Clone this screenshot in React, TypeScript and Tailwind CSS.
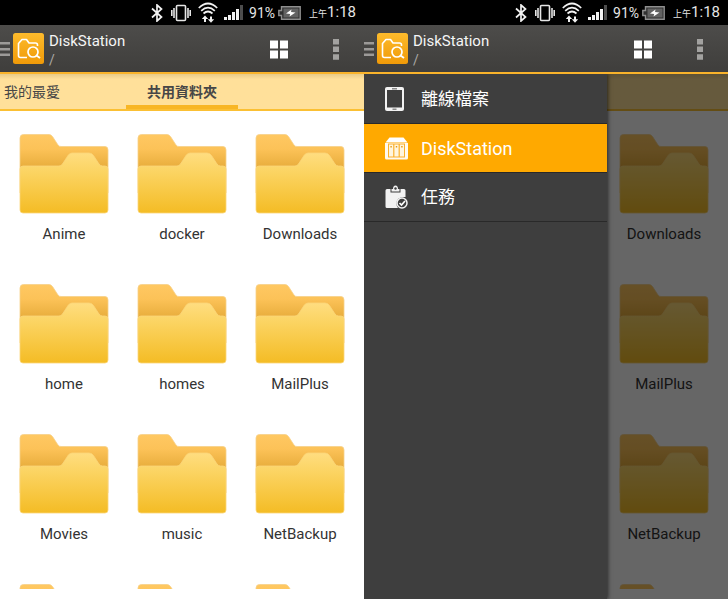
import { useState } from "react";
import clsx from "clsx";

const folders = [
  "Anime",
  "docker",
  "Downloads",
  "home",
  "homes",
  "MailPlus",
  "Movies",
  "music",
  "NetBackup",
];

const pending = [10, 11, 12];

const tabs = [
  { id: "favorites", label: "我的最愛", width: "w-[126px] pl-1 text-left" },
  { id: "shared", label: "共用資料夾", width: "w-28 text-center" },
];

function FolderIcon() {
  return (
    <svg width="90" height="81" viewBox="0 0 90 81" className="block">
      <defs>
        <linearGradient id="folder-back" x1="0" y1="0" x2="0" y2="1">
          <stop offset="0" stopColor="#ffc862" />
          <stop offset="0.25" stopColor="#fcc258" />
          <stop offset="0.56" stopColor="#e8ad3c" />
          <stop offset="1" stopColor="#e8ad3c" />
        </linearGradient>
        <linearGradient id="folder-front" x1="0" y1="0" x2="0" y2="1">
          <stop offset="0" stopColor="#ffdd80" />
          <stop offset="0.25" stopColor="#fcd668" />
          <stop offset="1" stopColor="#f4bc25" />
        </linearGradient>
      </defs>
      <path
        d="M1 5Q1 1.5 4.500 1.500H30Q32 1.500 33.500 3.500L39 12Q40 13.500 42 13.500H86Q89 13.500 89 17V60H1Z"
        fill="url(#folder-back)"
        stroke="#f6d089"
        strokeWidth="0.8"
      />
      <path
        d="M1 36Q1 33 4 33H40Q42 33 43.500 31L49 22.500Q50.500 20 53 20H70Q73 20 74.500 22.500L80 31Q81.500 33 83.500 33H86Q89 33 89 36V77Q89 80 86 80H4Q1 80 1 77Z"
        fill="url(#folder-front)"
        stroke="#fbd67a"
        strokeWidth="0.8"
      />
    </svg>
  );
}

function StatusBar() {
  return (
    <div className="flex h-[25px] shrink-0 items-center justify-end bg-black pr-2 text-[#e6e6e6]">
      <svg width="12" height="18" viewBox="0 0 12 18" fill="none" stroke="#f2f2f2" strokeWidth="1.700" className="mr-2">
        <path d="M1 4.500L10.500 13 6 17V1L10.500 5 1 13.500" />
      </svg>
      <svg width="20" height="18" viewBox="0 0 20 18" fill="none" stroke="#e6e6e6" strokeWidth="1.600" className="mr-[7px]">
        <rect x="5.500" y="1.500" width="9" height="15" rx="1" />
        <path d="M3 4V14M17 4V14M0.800 6V12M19.200 6V12" />
      </svg>
      <svg width="20" height="21" viewBox="0 0 20 21" fill="none" stroke="#f2f2f2" strokeWidth="1.700" className="mr-1.5">
        <path d="M0.800 6Q10-3 19.200 6M3.200 8.800Q10 2.500 16.800 8.800M5.500 11.500Q10 7.500 14.500 11.500" />
        <path d="M7 20V16M13 14.500V18" strokeWidth="2" />
        <path d="M3.800 17L7 13.500 10.200 17ZM9.800 17.200L13 20.800 16.200 17.200Z" fill="#f2f2f2" stroke="none" />
      </svg>
      <svg width="19" height="15" viewBox="0 0 19 15" fill="#f2f2f2" className="mr-1.5">
        <path d="M0 12h3v3H0zM4 10h3v5H4zM8 7h3v8H8zM12 4h3v11h-3z" />
        <path d="M16 0h3v15h-3z" fill="#4d4d4d" />
      </svg>
      <span className="mr-[3px] text-[14px] leading-none">91%</span>
      <svg width="23" height="14" viewBox="0 0 23 14" className="mr-2">
        <path d="M3.500 0.800H22.200V13.200H3.500V9.500H0.800V4.500H3.500Z" fill="#303030" stroke="#8f8f8f" strokeWidth="1.400" />
        <path d="M5.500 2.500H20.500V11.500H5.500Z" fill="#626262" />
        <path d="M8 7.500L13.500 3.500 13 6 17.500 6.500 11.500 10.500 12.200 8Z" fill="#fff" />
      </svg>
      <span className="pt-1 text-[9px] leading-none">上午</span>
      <span className="text-[15px] leading-none">1:18</span>
    </div>
  );
}

function ActionBar({ onToggle }: { onToggle: () => void }) {
  return (
    <header className="flex h-[49px] shrink-0 items-center border-b-2 border-[#f9b32b] bg-linear-to-b from-[#4d4c4a] to-[#3f3e3c]">
      <button aria-label="Menu" onClick={onToggle} className="flex items-center gap-[3px]">
        <svg width="10" height="15" viewBox="0 0 10 15" fill="#9c9a98">
          <path d="M0 1h10v2.500H0zM0 7h10v2.500H0zM0 12.500h10v2.500H0z" />
        </svg>
        <svg width="31" height="31" viewBox="0 0 31 31" fill="none">
          <defs>
            <linearGradient id="app-icon" x1="0" y1="0" x2="0" y2="1">
              <stop offset="0" stopColor="#fdbb2c" />
              <stop offset="1" stopColor="#f09a08" />
            </linearGradient>
          </defs>
          <rect width="31" height="31" rx="2.500" fill="url(#app-icon)" />
          <path
            d="M14 24.500H7.500Q5.500 24.500 5.500 22.500V10.500L9 6.500H13.500L16 10H22.500Q24.500 10 24.500 12V13"
            stroke="#fff"
            strokeWidth="1.600"
            strokeLinejoin="round"
          />
          <circle cx="20" cy="19" r="5" stroke="#fff" strokeWidth="1.700" />
          <path d="M23.500 22.500L27 25" stroke="#fff" strokeWidth="1.900" />
        </svg>
      </button>
      <div className="ml-[5px] flex-1 pt-1">
        <h1 className="text-[15px] leading-[18px] text-[#f5f5f5]">DiskStation</h1>
        <p className="text-[14px] leading-5 text-[#aaa8a6]">/</p>
      </div>
      <button aria-label="Grid view" className="mr-[45px] pt-px">
        <svg width="18" height="19" viewBox="0 0 18 19" fill="#fff">
          <path d="M0 0.500h8v8H0zM10 0.500h8v8h-8zM0 10.500h8v8H0zM10 10.500h8v8h-8z" />
        </svg>
      </button>
      <button aria-label="More options" className="mr-[25px] pt-0.5">
        <svg width="6" height="21" viewBox="0 0 6 21" fill="#a3a2a0">
          <path d="M0 0h6v5.500H0zM0 7.600h6v5.500H0zM0 15.300h6v5.500H0z" />
        </svg>
      </button>
    </header>
  );
}

function PhoneIcon() {
  return (
    <svg width="19" height="24" viewBox="0 0 19 24">
      <rect width="19" height="24" rx="2" fill="#f2f2f2" />
      <path d="M2 3h15v17.500H2z" fill="#3e3e3e" />
      <path d="M7 1h5v1.400H7zM7.500 21.500h4v1.500h-4z" fill="#8a8a8a" />
    </svg>
  );
}

function ServerIcon() {
  return (
    <svg width="23" height="23" viewBox="0 0 23 23">
      <path d="M4.500 0.500H18.500L22.500 5.500H0.500Z" fill="#fff" />
      <path d="M0 6H23V21Q23 22.500 21.500 22.500H1.500Q0 22.500 0 21Z" fill="#fffaf0" />
      <path d="M3 6.500H20V20.500H3Z" fill="#fbb12c" />
      <path d="M4 7.500h4.200v12H4zM9.400 7.500h4.200v12H9.400zM14.800 7.500h4.200v12h-4.200z" fill="#fff6e0" />
      <path d="M5.400 9h1.400v1.500H5.400zM10.800 9h1.400v1.500h-1.400zM16.200 9h1.400v1.500h-1.400z" fill="#e59a10" />
    </svg>
  );
}

function TaskIcon() {
  return (
    <svg width="23" height="24" viewBox="0 0 23 24">
      <path d="M2 4H5.500V7.500H15.500V4H19Q20.500 4 20.500 5.500V12Q11 11.500 11.500 19Q11.500 21.500 13 23H2Q0.500 23 0.500 21.500V5.500Q0.500 4 2 4Z" fill="#f2f2f2" />
      <path d="M6.500 6.500V4H8Q8 0.500 10.500 0.500T13 4H14.500V6.500Z" fill="#f2f2f2" />
      <circle cx="10.500" cy="3.500" r="1.200" fill="#3e3e3e" />
      <circle cx="17" cy="18" r="5" fill="#3e3e3e" stroke="#f2f2f2" strokeWidth="1.500" />
      <path d="M14.500 18L16.500 20 20 16" fill="none" stroke="#fff" strokeWidth="1.700" />
    </svg>
  );
}

const menu = [
  { id: "offline", label: "離線檔案", text: "text-[17px]", icon: <PhoneIcon /> },
  { id: "station", label: "DiskStation", text: "text-[18px]", icon: <ServerIcon /> },
  { id: "tasks", label: "任務", text: "text-[17px]", icon: <TaskIcon /> },
];

function Drawer() {
  const [active, setActive] = useState("station");

  return (
    <div className="absolute inset-0 overflow-hidden bg-black/60">
      <nav className="h-full w-2/3 bg-[#3e3e3e] pt-px shadow-[1px_0_4px_rgba(0,0,0,0.6)]">
        {menu.map((item) => (
          <button
            key={item.id}
            onClick={() => setActive(item.id)}
            className={clsx(
              "flex h-[49px] w-full items-center border-b border-[#292929] pl-5 text-white",
              item.text,
              active === item.id && "bg-[#ffa900]"
            )}
          >
            <span className="flex w-[37px] justify-start pl-px">{item.icon}</span>
            <span className="pt-px">{item.label}</span>
          </button>
        ))}
      </nav>
    </div>
  );
}

function Screen({ drawer = false }: { drawer?: boolean }) {
  const [open, setOpen] = useState(drawer);
  const [tab, setTab] = useState("shared");

  return (
    <section className="flex min-w-0 flex-1 flex-col overflow-hidden">
      <StatusBar />
      <ActionBar onToggle={() => setOpen(!open)} />
      <div className="relative flex min-h-0 flex-1 flex-col bg-white">
        <div className="flex h-[37px] shrink-0 border-b-2 border-[#fbc034] bg-linear-to-b from-[#e8cb88] to-[#ffe09a] to-15%">
          {tabs.map((t) => (
            <button
              key={t.id}
              onClick={() => setTab(t.id)}
              className={clsx(
                "border-b-4 pt-1.5 text-[14px] text-[#474747]",
                t.width,
                tab === t.id ? "border-[#f8b625] font-bold" : "border-transparent"
              )}
            >
              {t.label}
            </button>
          ))}
        </div>
        <main className="mb-[10px] grid min-h-0 flex-1 auto-rows-[150px] grid-cols-3 overflow-hidden px-[5px] pt-[22px]">
          {folders.map((name) => (
            <button key={name} className="flex flex-col items-center text-[15px] text-[#333]">
              <FolderIcon />
              <span className="mt-2.5 leading-5">{name}</span>
            </button>
          ))}
          {pending.map((n) => (
            <button key={n} aria-label="Folder" className="flex flex-col items-center">
              <FolderIcon />
            </button>
          ))}
        </main>
        {open && <Drawer />}
      </div>
    </section>
  );
}

export default function App() {
  return (
    <div className="flex h-screen overflow-hidden bg-white font-[Roboto,'Noto_Sans_CJK_TC',sans-serif]">
      <Screen />
      <Screen drawer />
    </div>
  );
}
